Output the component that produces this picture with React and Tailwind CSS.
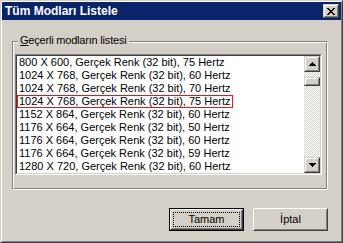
import React from "react";

const modes = [
  "800 X 600, Gerçek Renk (32 bit), 75 Hertz",
  "1024 X 768, Gerçek Renk (32 bit), 60 Hertz",
  "1024 X 768, Gerçek Renk (32 bit), 70 Hertz",
  "1024 X 768, Gerçek Renk (32 bit), 75 Hertz",
  "1152 X 864, Gerçek Renk (32 bit), 60 Hertz",
  "1176 X 664, Gerçek Renk (32 bit), 50 Hertz",
  "1176 X 664, Gerçek Renk (32 bit), 60 Hertz",
  "1176 X 664, Gerçek Renk (32 bit), 59 Hertz",
  "1280 X 720, Gerçek Renk (32 bit), 60 Hertz",
];

// classic 3d raised frame used by the scrollbar parts and the caption button
const Raised = ({ className = "", children }) => (
  <div className={`border border-t-[#D4D0C8] border-l-[#D4D0C8] border-r-[#404040] border-b-[#404040] ${className}`}>
    <div className="h-full border border-t-white border-l-white border-r-[#808080] border-b-[#808080] bg-[#D4D0C8] flex items-center justify-center">
      {children}
    </div>
  </div>
);

const Arrow = ({ down }) => (
  <svg width="7" height="4" viewBox="0 0 7 4" shapeRendering="crispEdges">
    {down ? (
      <path d="M0 0h7v1H0zM1 1h5v1H1zM2 2h3v1H2zM3 3h1v1H3z" fill="#000" />
    ) : (
      <path d="M3 0h1v1H3zM2 1h3v1H2zM1 2h5v1H1zM0 3h7v1H0z" fill="#000" />
    )}
  </svg>
);

const CloseGlyph = () => (
  <svg width="8" height="7" viewBox="0 0 8 7" shapeRendering="crispEdges">
    <path
      d="M0 0h2v1H0zM6 0h2v1H6zM1 1h2v1H1zM5 1h2v1H5zM2 2h4v1H2zM3 3h2v1H3zM2 4h4v1H2zM1 5h2v1H1zM5 5h2v1H5zM0 6h2v1H0zM6 6h2v1H6z"
      fill="#000"
    />
  </svg>
);

const App = () => {
  return (
    <div className="w-[343px] h-[243px] font-['Liberation_Sans',Arial,sans-serif] text-black border border-t-[#D4D0C8] border-l-[#D4D0C8] border-r-[#404040] border-b-[#404040]">
      <div className="h-full border border-t-white border-l-white border-r-[#808080] border-b-[#808080] bg-[#D4D0C8] flex flex-col">
        {/* Caption */}
        <div className="h-[18px] bg-[#0A246A] flex items-center justify-between pl-[3px] pr-[2px]">
          <span className="text-white font-bold text-[12px] leading-[18px]">Tüm Modları Listele</span>
          <Raised className="w-[16px] h-[14px]">
            <CloseGlyph />
          </Raised>
        </div>

        {/* Body */}
        <div className="flex-1 pl-[10px] pr-[13px] pt-[21px] text-[11px]">
          {/* Group box */}
          <div className="relative w-[316px] h-[149px] border border-t-[#808080] border-l-[#808080] border-r-white border-b-white">
            <div className="h-full border border-t-white border-l-white border-r-[#808080] border-b-[#808080] pt-[11px] pl-[1px]">
              {/* List box */}
              <div className="w-[307px] h-[121px] border border-t-[#808080] border-l-[#808080] border-r-white border-b-white">
                <div className="h-full border border-t-[#404040] border-l-[#404040] border-r-[#D4D0C8] border-b-[#D4D0C8] bg-white flex">
                  <div className="flex-1 overflow-hidden">
                    {modes.map((m, i) =>
                      i === 3 ? (
                        <div key={i} className="h-[13px] w-[216px] border border-[#E4161C] pl-[1px] leading-[11px] whitespace-nowrap">
                          {m}
                        </div>
                      ) : (
                        <div key={i} className="h-[13px] pl-[2px] leading-[13px] whitespace-nowrap">
                          {m}
                        </div>
                      )
                    )}
                  </div>
                  {/* Scrollbar */}
                  <div className="w-[16px] flex flex-col">
                    <Raised className="h-[16px]">
                      <Arrow />
                    </Raised>
                    <div className="flex-1 bg-[repeating-conic-gradient(#ffffff_0%_25%,#D4D0C8_0%_50%)] bg-[length:2px_2px] pt-[5px]">
                      <Raised className="h-[9px]" />
                    </div>
                    <Raised className="h-[16px]">
                      <Arrow down />
                    </Raised>
                  </div>
                </div>
              </div>
            </div>
            <span className="absolute left-[5px] top-[-8px] bg-[#D4D0C8] pl-[2px] pr-[3px] leading-[13px] tracking-[-0.2px]">
              <span className="underline">G</span>eçerli modların listesi
            </span>
          </div>

          {/* Buttons */}
          <div className="mt-[18px] flex justify-end gap-[9px]">
            <div className="w-[75px] h-[23px] border border-black">
              <div className="h-full border border-t-white border-l-white border-r-[#404040] border-b-[#404040]">
                <div className="h-full border border-t-[#D4D0C8] border-l-[#D4D0C8] border-r-[#808080] border-b-[#808080] p-[1px]">
                  <div className="h-full border border-dotted border-black flex items-center justify-center leading-[13px]">
                    Tamam
                  </div>
                </div>
              </div>
            </div>
            <div className="w-[75px] h-[23px] border border-t-white border-l-white border-r-[#404040] border-b-[#404040]">
              <div className="h-full border border-t-[#D4D0C8] border-l-[#D4D0C8] border-r-[#808080] border-b-[#808080] flex items-center justify-center leading-[13px]">
                İptal
              </div>
            </div>
          </div>
        </div>
      </div>
    </div>
  );
};

export default App;
